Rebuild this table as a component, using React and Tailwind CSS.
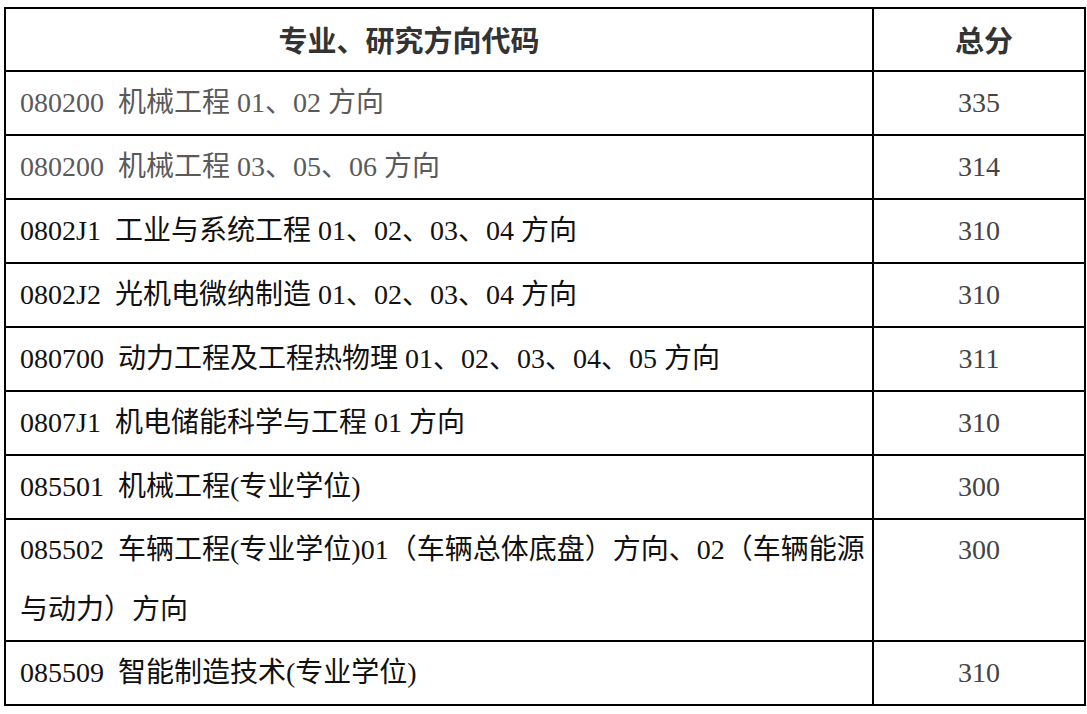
const rows = [
  { text: "080200\u00a0\u00a0机械工程 01、02 方向", score: "335", gray: true },
  { text: "080200\u00a0\u00a0机械工程 03、05、06 方向", score: "314", gray: true },
  { text: "0802J1\u00a0\u00a0工业与系统工程 01、02、03、04 方向", score: "310" },
  { text: "0802J2\u00a0\u00a0光机电微纳制造 01、02、03、04 方向", score: "310" },
  { text: "080700\u00a0\u00a0动力工程及工程热物理 01、02、03、04、05 方向", score: "311" },
  { text: "0807J1\u00a0\u00a0机电储能科学与工程 01 方向", score: "310" },
  { text: "085501\u00a0\u00a0机械工程(专业学位)", score: "300" },
];

const serif = "font-['Liberation_Serif','Noto_Sans_CJK_SC',serif]";

export default function App() {
  return (
    <div className="bg-white w-[1087px] h-[714px] pt-[7px] pl-[4px]">
      <table className={`table-fixed border-collapse w-[1080px] text-[28px] ${serif}`}>
        <colgroup>
          <col className="w-[868px]" />
          <col className="w-[212px]" />
        </colgroup>
        <thead>
          <tr>
            <th className="border-2 border-black h-[63px] pr-[60px] text-center font-bold text-[#333] font-['Noto_Sans_CJK_SC',sans-serif] text-[29px]">
              专业、研究方向代码
            </th>
            <th className="border-2 border-black h-[63px] text-center font-bold text-[#333] font-['Noto_Sans_CJK_SC',sans-serif] text-[29px] pl-[10px]">
              总分
            </th>
          </tr>
        </thead>
        <tbody>
          {rows.map((r) => (
            <tr key={r.text}>
              <td className={`border-2 border-black h-[62px] leading-[62px] px-[14px] whitespace-nowrap ${r.gray ? "text-[#5a5a5a]" : "text-[#111]"}`}>
                {r.text}
              </td>
              <td className="border-2 border-black h-[62px] leading-[62px] text-center text-[#444]">
                {r.score}
              </td>
            </tr>
          ))}
          <tr>
            <td className="border-2 border-black leading-[60px] pl-[14px] text-[#111] whitespace-nowrap">
              085502&nbsp;&nbsp;车辆工程(专业学位)01（车辆总体底盘）方向、02（车辆能源
              <br />
              与动力）方向
            </td>
            <td className="border-2 border-black leading-[60px] text-center align-top text-[#444]">
              300
            </td>
          </tr>
          <tr>
            <td className="border-2 border-black h-[62px] leading-[62px] px-[14px] text-[#111] whitespace-nowrap">
              085509&nbsp;&nbsp;智能制造技术(专业学位)
            </td>
            <td className="border-2 border-black h-[62px] leading-[62px] text-center text-[#444]">
              310
            </td>
          </tr>
        </tbody>
      </table>
    </div>
  );
}
